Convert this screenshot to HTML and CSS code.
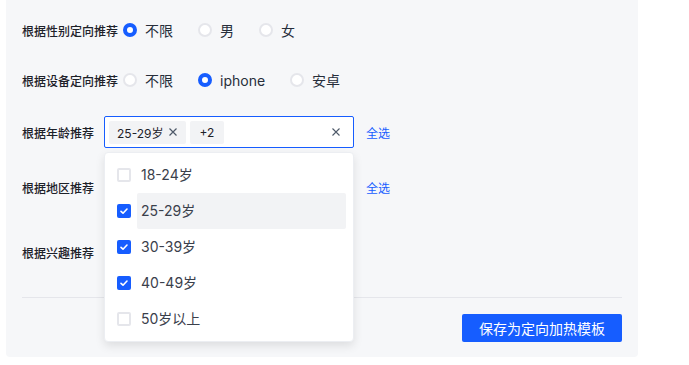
FILE: index.html
```html
<!DOCTYPE html>
<html lang="zh-CN">
  <head>
    <meta charset="UTF-8" />
    <meta name="viewport" content="width=device-width, initial-scale=1.0" />
    <title>定向推荐</title>
    <link rel="stylesheet" href="styles.css">
  </head>
  <body>
    <div class="panel">
      <div class="row row-gender">
        <span class="label">根据性别定向推荐</span>
        <div class="radio-group">
          <label class="radio"><span class="dot checked"></span>不限</label>
          <label class="radio"><span class="dot"></span>男</label>
          <label class="radio"><span class="dot"></span>女</label>
        </div>
      </div>

      <div class="row row-device">
        <span class="label">根据设备定向推荐</span>
        <div class="radio-group">
          <label class="radio"><span class="dot"></span>不限</label>
          <label class="radio"><span class="dot checked"></span>iphone</label>
          <label class="radio"><span class="dot"></span>安卓</label>
        </div>
      </div>

      <div class="row row-age">
        <span class="label">根据年龄推荐</span>
        <div class="select-wrap">
          <div class="select focused">
            <span class="tag">25-29岁
              <svg class="tag-close" viewBox="0 0 10 10"><path d="M1.5 1.5 L8.5 8.5 M8.5 1.5 L1.5 8.5" /></svg>
            </span>
            <span class="tag">+2</span>
            <svg class="clear" viewBox="0 0 10 10"><path d="M1.5 1.5 L8.5 8.5 M8.5 1.5 L1.5 8.5" /></svg>
          </div>
          <ul class="dropdown">
            <li class="option"><span class="check"></span><span class="opt-text">18-24岁</span></li>
            <li class="option"><span class="check on"></span><span class="opt-text hover">25-29岁</span></li>
            <li class="option"><span class="check on"></span><span class="opt-text">30-39岁</span></li>
            <li class="option"><span class="check on"></span><span class="opt-text">40-49岁</span></li>
            <li class="option"><span class="check"></span><span class="opt-text">50岁以上</span></li>
          </ul>
        </div>
        <a class="link" href="#">全选</a>
      </div>

      <div class="row row-region">
        <span class="label">根据地区推荐</span>
        <div class="select-space"></div>
        <a class="link" href="#">全选</a>
      </div>

      <div class="row row-interest">
        <span class="label">根据兴趣推荐</span>
      </div>

      <div class="divider"></div>

      <div class="footer">
        <button class="btn-primary" type="button">保存为定向加热模板</button>
      </div>
    </div>
  </body>
</html>
```

FILE: styles.css
```css
body {
  margin: 0;
  padding: 0;
  background-color: #fff;
  font-family: Inter, "Noto Sans CJK SC", sans-serif;
  color: #1d2129;
}

.panel {
  width: 600px;
  margin-left: 6px;
  padding: 0 16px 15px;
  background-color: #f6f7f9;
  border-radius: 0 0 4px 4px;
}

.row {
  display: flex;
  align-items: center;
  height: 32px;
}

.row-gender {
  padding-top: 14px;
}

.row-device {
  margin-top: 18px;
}

.row-age {
  margin-top: 20px;
}

.row-region {
  margin-top: 23px;
}

.row-interest {
  margin-top: 33px;
}

.label {
  font-size: 12px;
  font-weight: 500;
  color: #1d2129;
  white-space: nowrap;
}

.row-gender .label,
.row-device .label {
  margin-right: 5px;
}

.row-age .label,
.row-region .label {
  margin-right: 10px;
}

.radio-group {
  display: flex;
  align-items: center;
}

.radio {
  display: flex;
  align-items: center;
  font-size: 14px;
  color: #272e3b;
  margin-right: 25px;
  cursor: pointer;
}

.dot {
  box-sizing: border-box;
  width: 14px;
  height: 14px;
  border-radius: 50%;
  border: 2px solid #e5e6eb;
  background-color: #fff;
  margin-right: 8px;
}

.dot.checked {
  border: 4.5px solid #165dff;
}

.select-wrap {
  position: relative;
}

.select {
  box-sizing: border-box;
  width: 250px;
  height: 32px;
  display: flex;
  align-items: center;
  gap: 4px;
  padding: 0 4px;
  background-color: #fff;
  border: 1px solid #165dff;
  border-radius: 2px;
}

.tag {
  display: inline-flex;
  align-items: center;
  height: 23px;
  padding: 0 8px;
  background-color: #f2f3f5;
  border-radius: 2px;
  font-size: 12px;
  color: #1d2129;
}

.tag + .tag {
  padding: 0 10px;
}

.tag-close {
  width: 10px;
  height: 10px;
  margin-left: 4px;
  fill: none;
  stroke: #4e5969;
  stroke-width: 1.2;
}

.clear {
  width: 10px;
  height: 10px;
  margin-left: auto;
  margin-right: 8px;
  fill: none;
  stroke: #4e5969;
  stroke-width: 1.1;
}

.dropdown {
  position: absolute;
  top: 36px;
  left: 0;
  width: 250px;
  box-sizing: border-box;
  margin: 0;
  padding: 4px 0;
  list-style: none;
  background-color: #fff;
  border: 1px solid #eceef2;
  border-radius: 4px;
  box-shadow: 0 4px 10px rgba(0, 0, 0, 0.1);
  z-index: 10;
}

.option {
  display: flex;
  align-items: center;
  height: 36px;
  padding-left: 12px;
  padding-right: 7px;
}

.check {
  box-sizing: border-box;
  flex: none;
  width: 14px;
  height: 14px;
  border: 2px solid #e5e6eb;
  border-radius: 2px;
  background-color: #fff;
  margin-right: 6px;
}

.check.on {
  border: none;
  background-color: #165dff;
  background-image: url("data:image/svg+xml,%3Csvg xmlns='http://www.w3.org/2000/svg' viewBox='0 0 14 14'%3E%3Cpath d='M4 7.3 L6 9.2 L10 5' fill='none' stroke='%23fff' stroke-width='1.6' stroke-linecap='round' stroke-linejoin='round'/%3E%3C/svg%3E");
  background-size: 14px 14px;
}

.opt-text {
  flex: 1;
  height: 36px;
  line-height: 36px;
  padding-left: 4px;
  font-size: 14px;
  color: #3a404b;
  border-radius: 2px;
}

.opt-text.hover {
  background-color: #f2f3f5;
}

.link {
  margin-left: 12px;
  font-size: 12px;
  color: #165dff;
  text-decoration: none;
}

.select-space {
  width: 250px;
  height: 32px;
}

.divider {
  height: 1px;
  background-color: #e5e6eb;
  margin-top: 29px;
}

.footer {
  display: flex;
  justify-content: flex-end;
  margin-top: 16px;
}

.btn-primary {
  width: 160px;
  height: 28px;
  padding: 0;
  border: none;
  border-radius: 2px;
  background-color: #165dff;
  color: #fff;
  font-family: inherit;
  font-size: 14px;
  cursor: pointer;
}
```
